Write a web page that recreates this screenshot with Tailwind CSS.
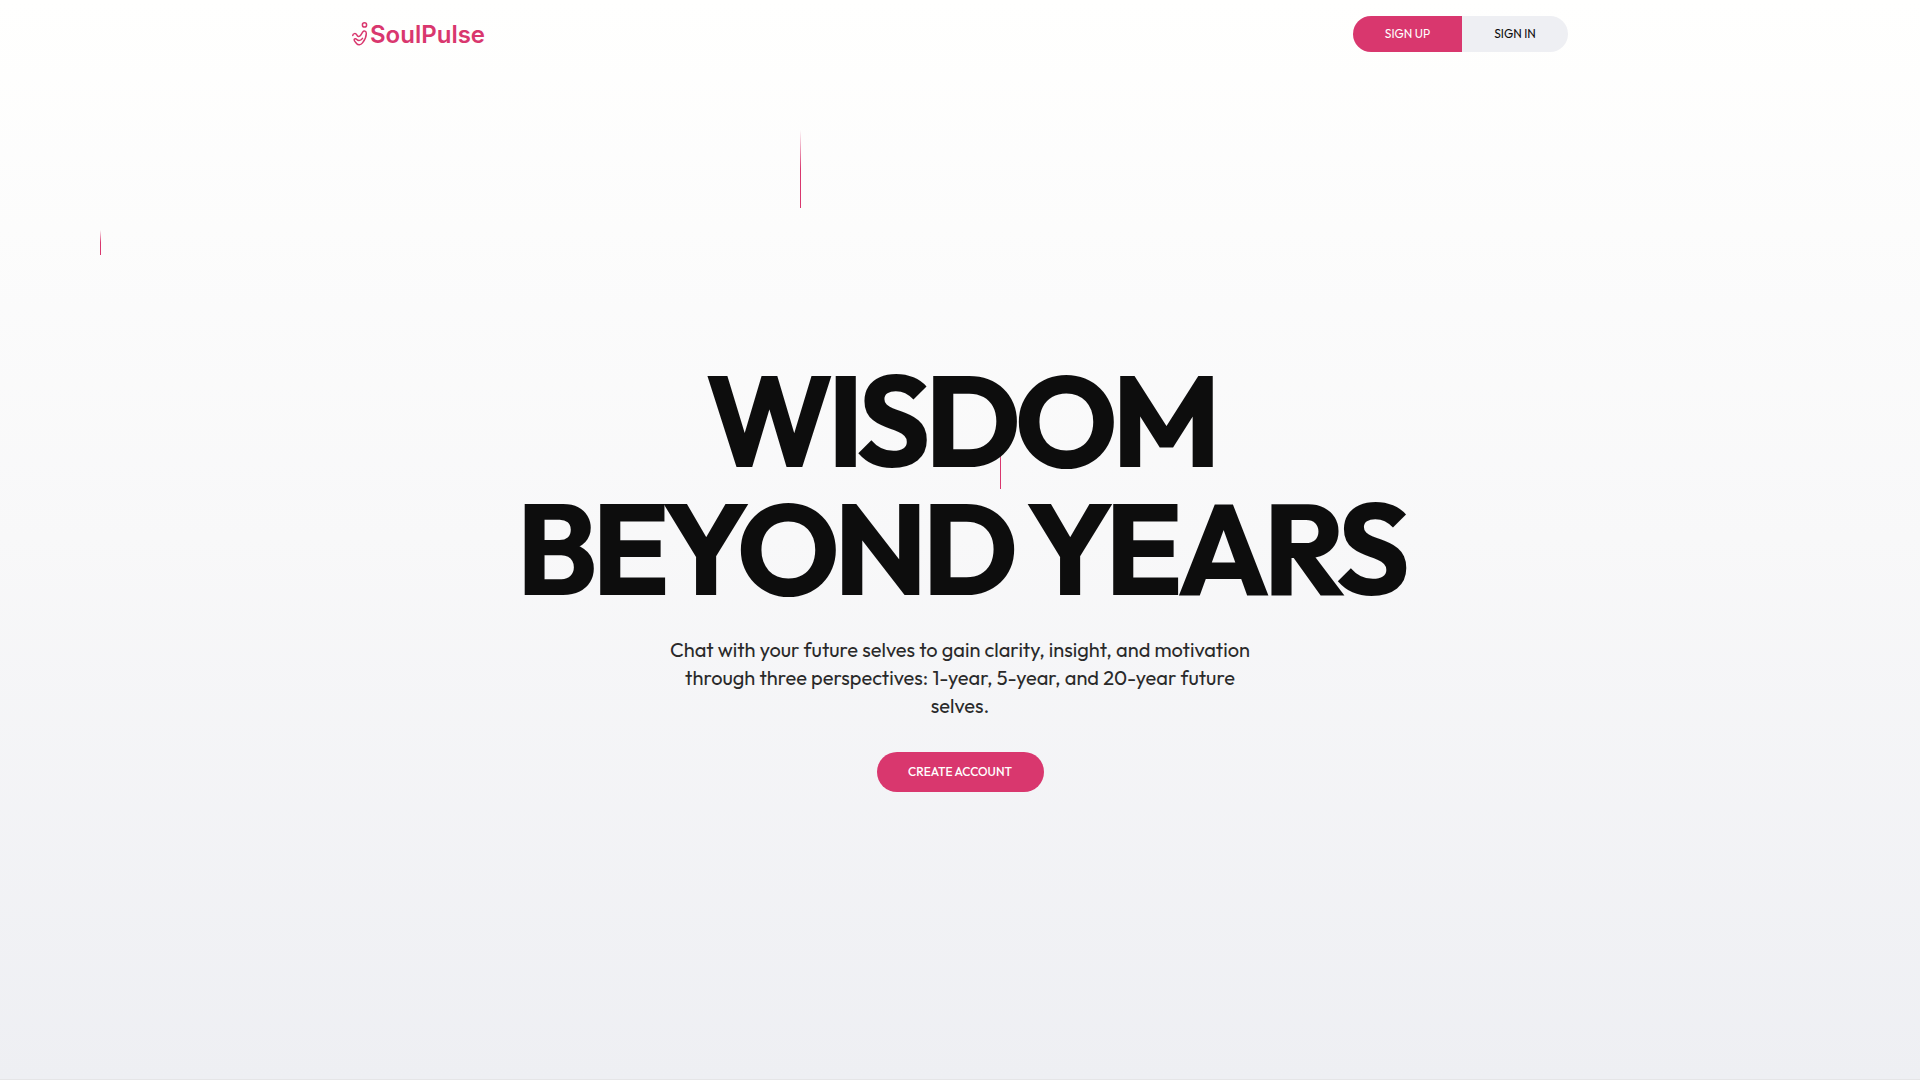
<!DOCTYPE html>
<html lang="en">
<head>
<meta charset="utf-8">
<meta name="viewport" content="width=device-width, initial-scale=1">
<title>SoulPulse</title>
<script src="https://cdn.jsdelivr.net/npm/@tailwindcss/browser@4"></script>
</head>
<body class="bg-[#eeeff3] font-['Outfit','Lato',sans-serif] text-[#0d0d0d] antialiased">
<div class="relative isolate flex min-h-screen flex-col overflow-hidden border-b border-[#e5e5e7] bg-linear-to-b from-[#fffffe] via-[#f8f8f9] to-[#eeeff3]">
  <!-- falling beams -->
  <div class="absolute left-[800px] top-[130px] -z-10 h-[78px] w-px bg-linear-to-t from-[#d9376e] via-[#d9376e] to-transparent" aria-hidden="true"></div>
  <div class="absolute left-[100px] top-[230px] -z-10 h-[25px] w-px bg-linear-to-t from-[#d9376e] via-[#d9376e] to-transparent" aria-hidden="true"></div>
  <div class="absolute left-[1000px] top-[433px] -z-10 h-14 w-px bg-linear-to-t from-[#d9376e] via-[#d9376e] to-transparent" aria-hidden="true"></div>

  <header class="mx-auto flex w-full max-w-7xl items-center justify-between px-8 py-4">
    <a href="#" class="flex items-center text-[#d9376e]">
      <svg class="h-6 w-[18px]" viewBox="0 0 18 24" fill="none" stroke="currentColor" stroke-width="1.5" stroke-linecap="round" stroke-linejoin="round" aria-hidden="true">
        <circle cx="12.500" cy="2.900" r="2.100"/>
        <path d="M.8 13.400C1 11.500 3.600 10.800 4.800 12.800C5.800 14.800 7.300 15 8.600 13.300L10.800 9.900C12 8.300 14.300 8.900 14.300 11.500C14.300 15.500 12.300 18.700 10.500 20.900C8.600 23.400 6 23.300 4.500 21.500C3.300 20 2.200 19 2.100 17.800C2.200 16.700 3.800 16.500 4.800 17.500C6.500 19.200 9 18.500 10.500 16.300"/>
      </svg>
      <span class="pt-0.5 font-['Inter',sans-serif] text-2xl/8 font-semibold">SoulPulse</span>
    </a>
    <div class="flex">
      <button type="button" class="h-9 w-[109px] rounded-l-full bg-[#d9376e] text-xs text-[#fffffe]">SIGN UP</button>
      <button type="button" class="h-9 w-[106px] rounded-r-full bg-[#eeeff3] text-xs">SIGN IN</button>
    </div>
  </header>

  <main class="flex grow flex-col items-center justify-center px-8 text-center">
    <h1 class="text-9xl/none font-bold tracking-tighter">WISDOM<br>BEYOND YEARS</h1>
    <p class="mt-6 max-w-[584px] text-xl/7 text-[#2a2a2a]">Chat with your future selves to gain clarity, insight, and motivation through three perspectives: 1-year, 5-year, and 20-year future selves.</p>
    <button type="button" class="mt-8 h-10 w-[167px] rounded-full bg-[#d9376e] text-xs font-medium text-[#fffffe]">CREATE ACCOUNT</button>
  </main>
</div>
</body>
</html>
